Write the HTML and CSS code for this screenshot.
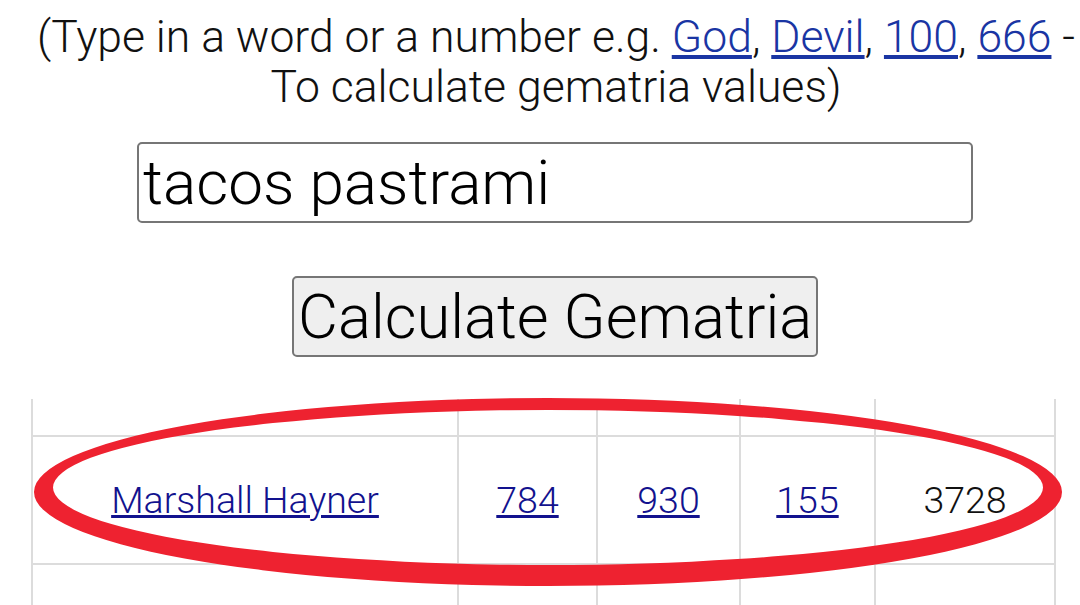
FILE: index.html
```html
<!DOCTYPE html>
<html lang="en">
<head>
<meta charset="UTF-8">
<meta name="viewport" content="width=device-width, initial-scale=1.0">
<title>Gematria Calculator</title>
<link rel="stylesheet" href="styles.css">
</head>
<body>
<div class="calc">
  <p class="hint">(Type in a word or a number e.g. <a href="#">God</a>, <a href="#">Devil</a>, <a href="#">100</a>, <a href="#">666</a> - To calculate gematria values)</p>

  <form class="calc-form">
    <input type="text" class="word-input" value="tacos pastrami">
    <button type="button" class="calc-button">Calculate Gematria</button>
  </form>

  <!-- Results table with the circled row -->
  <div class="results">
    <table class="results-table">
      <tr class="head-row">
        <td></td><td></td><td></td><td></td><td></td>
      </tr>
      <tr class="match-row">
        <td><a href="#">Marshall Hayner</a></td>
        <td><a href="#">784</a></td>
        <td><a href="#">930</a></td>
        <td><a href="#">155</a></td>
        <td>3728</td>
      </tr>
      <tr class="next-row">
        <td></td><td></td><td></td><td></td><td></td>
      </tr>
    </table>
    <svg class="circle-mark" width="1080" height="200" viewBox="0 0 1080 200">
      <path fill="#ee2230" fill-rule="evenodd" d="M34 94 A514 94 0 1 0 1062 94 A514 94 0 1 0 34 94 Z M53 89.5 A495 77.5 0 1 1 1043 89.5 A495 77.5 0 1 1 53 89.5 Z"/>
    </svg>
  </div>
</div>
</body>
</html>
```

FILE: styles.css
```css
body {
  margin: 0;
  padding: 0;
  background: #fff;
  color: #111;
  font-family: Roboto, "Noto Sans", Arial, sans-serif;
  overflow: hidden;
}

.calc {
  width: 1080px;
}

.hint {
  margin: 0;
  padding: 12px 2px 0 34px;
  text-align: center;
  font-size: 44.5px;
  line-height: 50px;
  font-weight: 300;
}

.hint a {
  color: #1a35a3;
}

.calc-form {
  display: flex;
  flex-direction: column;
  align-items: flex-start;
  margin-top: 30px;
}

.word-input {
  box-sizing: border-box;
  width: 836px;
  height: 81px;
  margin-left: 137px;
  padding: 0 4px;
  border: 2px solid #767676;
  border-radius: 5px;
  font-family: Roboto, sans-serif;
  font-size: 62px;
  font-weight: 300;
  color: #000;
}

.calc-button {
  box-sizing: border-box;
  height: 81px;
  margin: 53px 0 0 292px;
  padding: 0 4px;
  border: 2px solid #767676;
  border-radius: 5px;
  background: #efefef;
  font-family: Roboto, sans-serif;
  font-size: 61.5px;
  font-weight: 300;
  color: #000;
}

.results {
  position: relative;
  margin-top: 42px;
}

.results-table {
  border-collapse: collapse;
  margin-left: 31px;
  width: 1025px;
  font-size: 37.5px;
  font-weight: 300;
  text-align: center;
}

.results-table td {
  border: 2px solid #dcdcdc;
  padding: 0;
}

.results-table td:nth-child(1) { width: 424px; }
.results-table td:nth-child(2) { width: 137px; }
.results-table td:nth-child(3) { width: 141px; }
.results-table td:nth-child(4) { width: 133px; }

.head-row td {
  border-top: none;
  height: 36px;
}

.match-row td {
  height: 126px;
}

.next-row td {
  height: 60px;
}

.results-table a {
  color: #12128e;
}

.circle-mark {
  position: absolute;
  left: 0;
  top: -1px;
}
```
